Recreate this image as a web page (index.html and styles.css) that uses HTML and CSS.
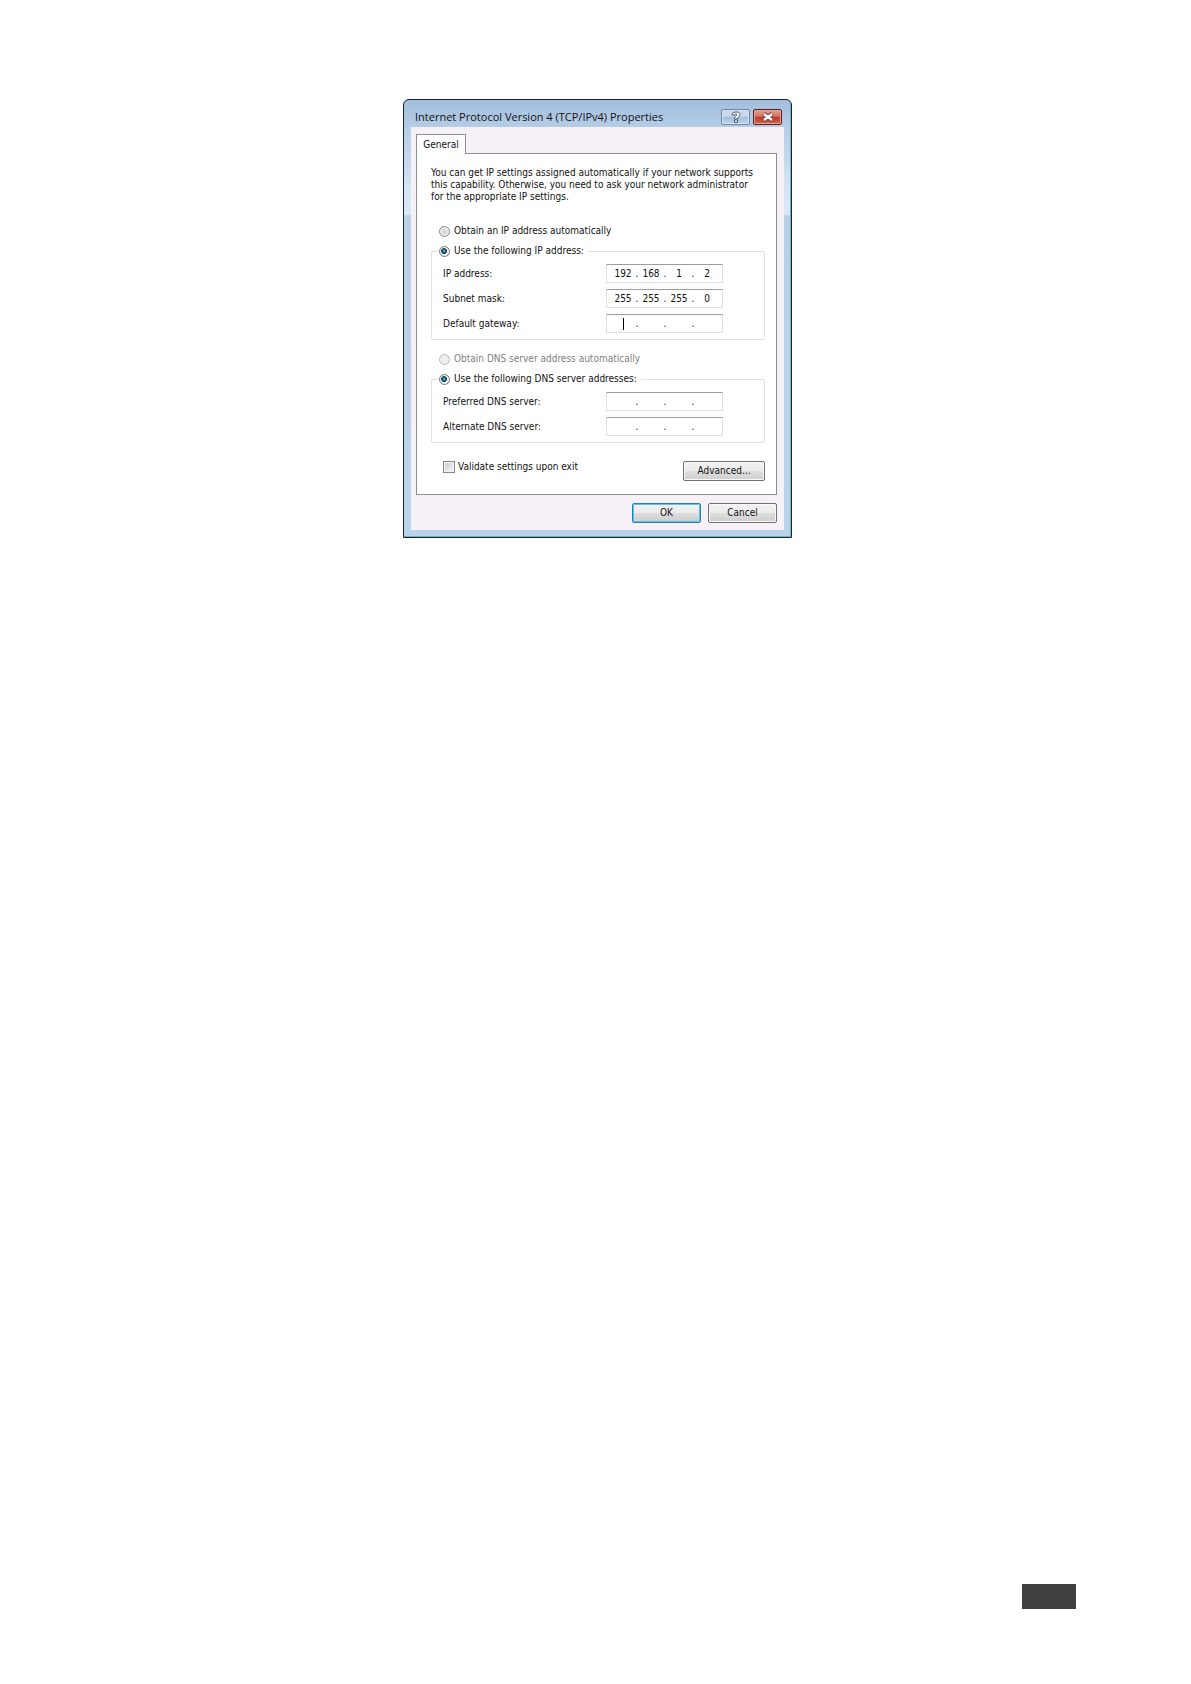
FILE: index.html
```
<!DOCTYPE html>
<html lang="en">
<head>
    <meta charset="UTF-8">
    <meta name="viewport" content="width=device-width, initial-scale=1.0">
    <title>Internet Protocol Version 4 (TCP/IPv4) Properties</title>
    <link rel="stylesheet" href="styles.css">
</head>
<body>

<main>
    <form class="window">
        <div class="titlebar">
            <h1>Internet Protocol Version 4 (TCP/IPv4) Properties</h1>
            <button type="button" class="title-button" aria-label="Help">
                <svg width="10" height="12" viewBox="0 0 10 12" fill="none">
                    <path d="M1 4C1 0 9 0 9 3.5C9 5.500 6.500 5.500 6.500 8H3.500C3.500 5 6 5 6 3.800C6 2.800 4 2.800 4 4ZM3.500 9H6.500V11.500H3.500Z" fill="#fff" stroke="#4a5870"/>
                </svg>
            </button>
            <button type="button" class="title-button close" aria-label="Close">
                <svg width="12" height="10" viewBox="0 0 12 10" fill="none">
                    <path d="M2 1.500L10 8.500M10 1.500L2 8.500" stroke="#6b3a42" stroke-width="4"/>
                    <path d="M2 2L10 8M10 2L2 8" stroke="#fff" stroke-width="2.400"/>
                </svg>
            </button>
        </div>

        <div class="content">
            <button type="button" class="tab">General</button>

            <div class="panel">
                <p>You can get IP settings assigned automatically if your network supports<br>
                this capability. Otherwise, you need to ask your network administrator<br>
                for the appropriate IP settings.</p>

                <label class="option"><input type="radio" name="ip"> Obtain an IP address automatically</label>

                <fieldset>
                    <legend><label class="option"><input type="radio" name="ip" checked> Use the following IP address:</label></legend>
                    <div class="row">
                        <label for="ip1">IP address:</label>
                        <div class="address">
                            <input type="text" id="ip1" value="192"><span>.</span><input type="text" value="168" aria-label="IP address 2"><span>.</span><input type="text" value="1" aria-label="IP address 3"><span>.</span><input type="text" value="2" aria-label="IP address 4">
                        </div>
                    </div>
                    <div class="row">
                        <label for="mask1">Subnet mask:</label>
                        <div class="address">
                            <input type="text" id="mask1" value="255"><span>.</span><input type="text" value="255" aria-label="Subnet mask 2"><span>.</span><input type="text" value="255" aria-label="Subnet mask 3"><span>.</span><input type="text" value="0" aria-label="Subnet mask 4">
                        </div>
                    </div>
                    <div class="row">
                        <label for="gateway1">Default gateway:</label>
                        <div class="address">
                            <input type="text" id="gateway1" class="caret"><span>.</span><input type="text" aria-label="Default gateway 2"><span>.</span><input type="text" aria-label="Default gateway 3"><span>.</span><input type="text" aria-label="Default gateway 4">
                        </div>
                    </div>
                </fieldset>

                <label class="option disabled"><input type="radio" name="dns" disabled> Obtain DNS server address automatically</label>

                <fieldset>
                    <legend><label class="option"><input type="radio" name="dns" checked> Use the following DNS server addresses:</label></legend>
                    <div class="row">
                        <label for="preferred1">Preferred DNS server:</label>
                        <div class="address">
                            <input type="text" id="preferred1"><span>.</span><input type="text" aria-label="Preferred DNS 2"><span>.</span><input type="text" aria-label="Preferred DNS 3"><span>.</span><input type="text" aria-label="Preferred DNS 4">
                        </div>
                    </div>
                    <div class="row">
                        <label for="alternate1">Alternate DNS server:</label>
                        <div class="address">
                            <input type="text" id="alternate1"><span>.</span><input type="text" aria-label="Alternate DNS 2"><span>.</span><input type="text" aria-label="Alternate DNS 3"><span>.</span><input type="text" aria-label="Alternate DNS 4">
                        </div>
                    </div>
                </fieldset>

                <div class="panel-bottom">
                    <label class="validate"><input type="checkbox"> Validate settings upon exit</label>
                    <button type="button" class="button advanced">Advanced...</button>
                </div>
            </div>

            <div class="actions">
                <button type="button" class="button default">OK</button>
                <button type="button" class="button">Cancel</button>
            </div>
        </div>
    </form>
</main>

<footer>
    <div class="page-mark"></div>
</footer>

</body>
</html>
```

FILE: styles.css
```
* {
    box-sizing: border-box;
}

body {
    display: flex;
    flex-direction: column;
    min-height: 100vh;
    margin: 0;
    background-color: white;
    color: #111;
    font-family: "DejaVu Sans Condensed", "DejaVu Sans", sans-serif;
    font-size: 10px;
    line-height: 12px;
}

main {
    display: flex;
    justify-content: center;
    padding: 99px 0 40px 4px;
}

button, input {
    font: inherit;
    color: inherit;
    margin: 0;
}

.window {
    width: 389px;
    padding: 0 7px 7px;
    border: 1px solid #14262f;
    border-radius: 6px 6px 0 0;
    background: linear-gradient(#a3bfdd, #b5cde7 28px, #d5e5f5 90px, #dbe9f7 114px, #b9d1e8 116px, #b9d3ea);
    box-shadow: inset -1px -1px #6fb3c4;
}

/* Title bar */
.titlebar {
    display: flex;
    align-items: center;
    gap: 3px;
    height: 27px;
    padding: 7px 2px 0 4px;
}

.titlebar h1 {
    flex: 1;
    margin: 0;
    font-family: "Open Sans", sans-serif;
    font-size: 11px;
    font-weight: normal;
    line-height: 16px;
    white-space: nowrap;
}

.title-button {
    display: flex;
    align-items: center;
    justify-content: center;
    width: 29px;
    height: 16px;
    padding: 0;
    border: 1px solid #6d87a6;
    border-radius: 2px;
    background: linear-gradient(#c9d9eb 45%, #a5bfdb 50%, #bdd3ea);
    box-shadow: inset 0 0 0 1px #d5e3f2;
}

.title-button.close {
    border-color: #5c1d20;
    background: linear-gradient(#e0a090, #d27462 45%, #bd3a24 50%, #d0644c);
    box-shadow: inset 0 0 0 1px #e2a495;
}

.content {
    padding: 7px 7px 7px 5px;
    background-color: #f5f1f7;
}

/* Tab and its page */
.tab {
    display: block;
    position: relative;
    width: 50px;
    height: 20px;
    margin-bottom: -1px;
    padding: 0;
    border: 1px solid #8e8f96;
    border-bottom: 0;
    background-color: white;
}

.panel {
    display: flex;
    flex-direction: column;
    padding: 13px 11px 13px 14px;
    border: 1px solid #8e8f96;
    background-color: white;
}

.panel p {
    margin: 0 0 21px;
    white-space: nowrap;
}

.option {
    display: flex;
    align-items: center;
    gap: 4px;
    height: 14px;
    white-space: nowrap;
}

.panel > .option {
    margin-left: 8px;
}

.option.disabled {
    color: #808080;
}

input[type="radio"] {
    appearance: none;
    width: 11px;
    height: 11px;
    border: 1px solid #85888b;
    border-radius: 50%;
    background: radial-gradient(#ccc, #f4f4f4 70%);
}

input[type="radio"]:checked {
    border-color: #73797e;
    background: radial-gradient(circle at 45% 45%, #7fd4ee, #17658a 22%, #12344d 36%, #f0f0f0 46%);
}

input[type="radio"]:disabled {
    border-color: #bbb;
    background: #eee;
}

fieldset {
    min-width: 0;
    margin: 6px 0 12px;
    padding: 6px 41px 6px 11px;
    border: 1px solid #dfe2e5;
    border-radius: 2px;
}

legend {
    margin-left: -4px;
    padding: 0 4px 0 0;
}

.row {
    display: flex;
    align-items: center;
    justify-content: space-between;
}

.row + .row {
    margin-top: 6px;
}

.address {
    display: flex;
    align-items: center;
    width: 117px;
    height: 19px;
    padding-left: 4px;
    border: 1px solid #dcdfe3;
    border-top-color: #9a9ca3;
}

.address input {
    width: 24px;
    height: 15px;
    padding: 0;
    border: 0;
    outline: 0;
    background: none;
    text-align: center;
}

.address .caret {
    background: linear-gradient(#000, #000) center / 1px 12px no-repeat;
}

.address span {
    width: 4px;
    text-align: center;
}

.panel-bottom {
    display: flex;
    justify-content: space-between;
    padding: 6px 0 0 12px;
}

.validate {
    display: flex;
    align-items: center;
    gap: 3px;
    height: 12px;
}

input[type="checkbox"] {
    appearance: none;
    width: 12px;
    height: 12px;
    border: 1px solid #85888b;
    background: linear-gradient(135deg, #ccc, #f6f6f6);
    box-shadow: inset 0 0 0 1px #f4f4f4;
}

/* Push buttons */
.button {
    width: 69px;
    height: 20px;
    padding: 0;
    border: 1px solid #707070;
    border-radius: 2px;
    background: linear-gradient(#f2f2f2, #ebebeb 48%, #dddddd 52%, #cfcfcf);
    box-shadow: inset 0 0 0 1px #f8f8f8;
}

.button.advanced {
    width: 82px;
}

.button.default {
    border-color: #2f7ba4;
    box-shadow: inset 0 0 0 1px #5cc4ea;
}

.actions {
    display: flex;
    justify-content: flex-end;
    gap: 7px;
    padding-top: 8px;
}

footer {
    display: flex;
    justify-content: flex-end;
    margin-top: auto;
    padding: 0 115px 75px 0;
}

.page-mark {
    width: 54px;
    height: 25px;
    background-color: #404040;
}
```
